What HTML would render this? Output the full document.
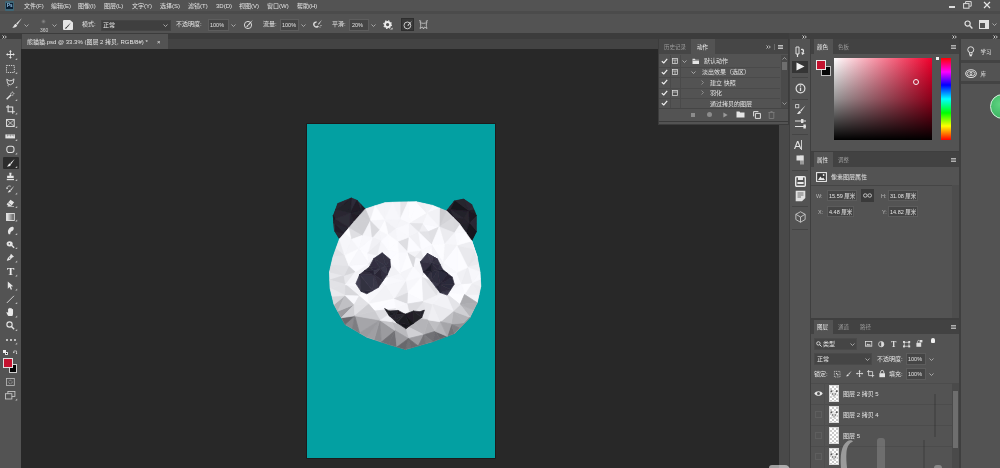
<!DOCTYPE html>
<html lang="zh-CN">
<head>
<meta charset="utf-8">
<title>熊猫猫.psd @ 33.3%</title>
<style>
*{margin:0;padding:0;box-sizing:border-box}
html,body{width:1000px;height:468px;overflow:hidden;background:#282828}
body{position:relative;font-family:"Liberation Sans","Noto Sans CJK SC",sans-serif;font-size:6px;color:#e4e4e4;line-height:1}
.a{position:absolute}
.t{position:absolute;white-space:nowrap;line-height:8px;height:8px}
.dim{color:#9a9a9a}
.inp{position:absolute;background:#454545;border:1px solid #666}
svg{position:absolute;overflow:visible}
.thumb{width:10px;height:17px;border:1px solid #d8d8d8;background-color:#fff;background-image:linear-gradient(45deg,#ccc 25%,transparent 25%,transparent 75%,#ccc 75%),linear-gradient(45deg,#ccc 25%,transparent 25%,transparent 75%,#ccc 75%);background-size:4px 4px;background-position:0 0,2px 2px}
</style>
</head>
<body>
<div id="app" style="position:absolute;left:0;top:0;width:1000px;height:468px;overflow:hidden;filter:blur(.3px);will-change:transform">
<!-- MENU BAR -->
<div class="a" id="menubar" style="left:0;top:0;width:1000px;height:14px;background:#535353"></div>
<div class="a" style="left:0;top:11px;width:1000px;height:3px;background:#4b4b4b"></div>
<div class="a" style="left:5px;top:1px;width:9px;height:9.500px;background:#3f6676;border-radius:1px"></div>
<div class="a" style="left:6px;top:3px;width:7px;height:5.500px;background:#0b1f33"></div>
<div class="t" style="left:7px;top:1.500px;font-size:4.500px;color:#9fcdf2;font-weight:bold">Ps</div>
<div class="t" style="left:24px;top:2px">文件(F)</div>
<div class="t" style="left:51px;top:2px">编辑(E)</div>
<div class="t" style="left:78px;top:2px">图像(I)</div>
<div class="t" style="left:104px;top:2px">图层(L)</div>
<div class="t" style="left:132px;top:2px">文字(Y)</div>
<div class="t" style="left:160px;top:2px">选择(S)</div>
<div class="t" style="left:188px;top:2px">滤镜(T)</div>
<div class="t" style="left:216px;top:2px">3D(D)</div>
<div class="t" style="left:239px;top:2px">视图(V)</div>
<div class="t" style="left:267px;top:2px">窗口(W)</div>
<div class="t" style="left:297px;top:2px">帮助(H)</div>

<!-- OPTIONS BAR -->
<div class="a" id="optbar" style="left:0;top:14px;width:1000px;height:19px;background:#535353"></div>

<!-- TAB BAR / DOCK HEADER -->
<div class="a" id="tabbar" style="left:0;top:33px;width:1000px;height:15.700px;background:#434343"></div>
<div class="a" style="left:0;top:33px;width:1000px;height:6px;background:#3c3c3c"></div>
<div class="a" id="tab" style="left:22px;top:33.500px;width:145.500px;height:15.200px;background:#535353"></div>
<div class="t" style="left:27px;top:38px">熊猫猫.psd @ 33.3% (图层 2 拷贝, RGB/8#) *</div>
<div class="t" style="left:157px;top:38px">×</div>

<!-- LEFT TOOLBAR -->
<div class="a" id="toolbar" style="left:0;top:39px;width:21px;height:429px;background:#535353"></div>

<!-- CANVAS -->
<div class="a" id="doc" style="left:306.500px;top:123.500px;width:188.500px;height:334.500px;background:#03a0a2;box-shadow:0 0 0 .6px #161616"></div>

<!-- DOC SCROLLBAR -->
<div class="a" style="left:779px;top:48px;width:10px;height:420px;background:#494949"></div>
<!-- RIGHT DOCK BG -->
<div class="a" id="dock" style="left:789px;top:33px;width:211px;height:435px;background:#3f3f3f"></div>
<!-- OPTIONS BAR CONTENT -->
<svg style="left:10.500px;top:17px" width="12" height="12" viewBox="0 0 12 12"><path d="M10.8 1.2 L5.2 6.6 L6.4 7.8 Z" fill="#e0e0e0"/><path d="M4.9 7 C3.2 7 3.4 9.2 1.2 10.6 C3.6 11 6 10 6.2 8.2 Z" fill="#e0e0e0"/></svg>
<svg style="left:24px;top:24px" width="5" height="3" viewBox="0 0 5 3"><path d="M.5 .5 L2.5 2.5 L4.5 .5" stroke="#bdbdbd" fill="none" stroke-width=".8"/></svg>
<div class="a" style="left:41px;top:19px;width:5px;height:5px;border-radius:50%;background:radial-gradient(circle,#8a8a8a 0%,#535353 70%)"></div>
<div class="t" style="left:40px;top:26px;font-size:5px;color:#cfcfcf">360</div>
<svg style="left:52px;top:24px" width="5" height="3" viewBox="0 0 5 3"><path d="M.5 .5 L2.5 2.5 L4.5 .5" stroke="#bdbdbd" fill="none" stroke-width=".8"/></svg>
<svg style="left:63px;top:20px" width="10" height="10" viewBox="0 0 10 10"><path d="M1 0 H7 L10 2.5 V9 a1 1 0 0 1 -1 1 H1 a1 1 0 0 1 -1 -1 V1 a1 1 0 0 1 1 -1Z" fill="#e6e6e6"/><path d="M8 2.5 L3.8 6.4 L4.6 7.2 Z M3.4 6.8 C2.6 7 2.8 8 1.8 8.6 C3 8.8 4.2 8.4 4.2 7.5Z" fill="#3a3a3a"/></svg>
<div class="t" style="left:82px;top:20px">模式:</div>
<div class="inp" style="left:101px;top:20px;width:70px;height:11px;border-color:#444;background:#3f3f3f"></div>
<div class="t" style="left:103px;top:21px">正常</div>
<svg style="left:163px;top:24px" width="5" height="3" viewBox="0 0 5 3"><path d="M.5 .5 L2.5 2.5 L4.5 .5" stroke="#bdbdbd" fill="none" stroke-width=".8"/></svg>
<div class="t" style="left:176px;top:20px">不透明度:</div>
<div class="inp" style="left:208px;top:19px;width:21px;height:12px;border-color:#5e5e5e"></div>
<div class="t" style="left:210px;top:21px;font-size:5.5px">100%</div>
<svg style="left:231px;top:24px" width="5" height="3" viewBox="0 0 5 3"><path d="M.5 .5 L2.5 2.5 L4.5 .5" stroke="#bdbdbd" fill="none" stroke-width=".8"/></svg>
<svg style="left:243px;top:19px" width="11" height="11" viewBox="0 0 11 11"><circle cx="5" cy="6" r="3.6" stroke="#d8d8d8" stroke-width="1" fill="none"/><path d="M10 .8 L5 5.6 L5.8 6.4 Z" fill="#e6e6e6"/><path d="M4.6 6 C3.8 6.2 4 7.2 3 7.8 C4.2 8 5.4 7.6 5.4 6.7Z" fill="#e6e6e6"/></svg>
<div class="t" style="left:263px;top:20px">流量:</div>
<div class="inp" style="left:280px;top:19px;width:19px;height:12px;border-color:#5e5e5e"></div>
<div class="t" style="left:282px;top:21px;font-size:5.5px">100%</div>
<svg style="left:301px;top:24px" width="5" height="3" viewBox="0 0 5 3"><path d="M.5 .5 L2.5 2.5 L4.5 .5" stroke="#bdbdbd" fill="none" stroke-width=".8"/></svg>
<svg style="left:312px;top:19px" width="11" height="11" viewBox="0 0 11 11"><path d="M1 5.5 C1 3 3 2 5 2.6 L4.2 4 C3 3.8 2.4 4.6 2.6 5.8 C2.8 7.4 4.6 7.8 5.6 6.6 L7 7.4 C5.4 9.6 1.4 8.8 1 5.5Z" fill="#d8d8d8"/><path d="M10 .8 L6 5 L6.8 5.8 Z" fill="#e6e6e6"/><circle cx="9" cy="6.5" r=".6" fill="#ddd"/><circle cx="8" cy="8" r=".5" fill="#ddd"/></svg>
<div class="t" style="left:332px;top:20px">平滑:</div>
<div class="inp" style="left:349px;top:19px;width:20px;height:12px;border-color:#5e5e5e"></div>
<div class="t" style="left:352px;top:21px;font-size:5.5px">20%</div>
<svg style="left:371px;top:24px" width="5" height="3" viewBox="0 0 5 3"><path d="M.5 .5 L2.5 2.5 L4.5 .5" stroke="#bdbdbd" fill="none" stroke-width=".8"/></svg>
<svg style="left:383px;top:20px" width="10" height="10" viewBox="0 0 10 10"><circle cx="4.6" cy="4.6" r="2.6" stroke="#ececec" stroke-width="1.9" fill="none"/><circle cx="4.6" cy="4.6" r="3.9" stroke="#ececec" stroke-width="1.1" fill="none" stroke-dasharray="1.4 1.66"/><path d="M7 9.6 L9.6 9.6 L9.6 7.6Z" fill="#d0d0d0"/></svg>
<div class="a" style="left:401px;top:18px;width:13px;height:13px;background:#383838;border:1px solid #2e2e2e"></div>
<svg style="left:403px;top:20px" width="10" height="10" viewBox="0 0 10 10"><circle cx="4.4" cy="5.4" r="3.4" stroke="#d8d8d8" stroke-width=".9" fill="none"/><path d="M9.4 .6 L4.4 5.2 L5.2 6 Z" fill="#e6e6e6"/></svg>
<svg style="left:418px;top:19px" width="11" height="11" viewBox="0 0 11 11"><path d="M2 3 L1 1 L3.5 2 Z M9 3 L10 1 L7.5 2Z" fill="#d0d0d0"/><path d="M2 3.5 C3 5 3 7 2 9.5 L4.5 8 L5.5 10 L6.5 8 L9 9.5 C8 7 8 5 9 3.5 C7 4.6 4 4.6 2 3.5Z" stroke="#d0d0d0" stroke-width=".8" fill="none"/></svg>
<!-- right of options bar -->
<svg style="left:964px;top:20px" width="9" height="9" viewBox="0 0 9 9"><circle cx="3.6" cy="3.6" r="2.6" stroke="#e0e0e0" stroke-width="1.2" fill="none"/><path d="M5.6 5.6 L8.4 8.4" stroke="#e0e0e0" stroke-width="1.4"/></svg>
<svg style="left:979px;top:20px" width="10" height="9" viewBox="0 0 10 9"><rect x=".5" y=".5" width="9" height="8" stroke="#e0e0e0" fill="none"/><rect x="1" y="1" width="8" height="2" fill="#e0e0e0"/><rect x="6" y="3" width="3" height="5" fill="#e0e0e0"/></svg>
<svg style="left:992px;top:23px" width="5" height="3" viewBox="0 0 5 3"><path d="M.5 .5 L2.5 2.5 L4.5 .5" stroke="#bdbdbd" fill="none" stroke-width=".8"/></svg>
<!-- window controls -->
<div class="a" style="left:949px;top:6px;width:6px;height:1.5px;background:#dcdcdc"></div>
<svg style="left:963px;top:1px" width="9" height="8" viewBox="0 0 9 8"><rect x=".6" y="2.6" width="5.4" height="4.6" stroke="#dcdcdc" fill="none" stroke-width="1"/><path d="M2.6 2.2 V.6 H8.2 V5.2 H6.4" stroke="#dcdcdc" fill="none" stroke-width="1"/></svg>
<svg style="left:983px;top:1px" width="8" height="8" viewBox="0 0 8 8"><path d="M1 1 L7 7 M7 1 L1 7" stroke="#e6e6e6" stroke-width="1.2"/></svg>

<!-- TOOL ICONS -->
<svg style="left:2px;top:34.5px" width="5" height="4" viewBox="0 0 5 4"><path d="M.5 .5 L2 2 L.5 3.500 M2.800 .5 L4.300 2 L2.800 3.500" fill="none" stroke="#d8d8d8" stroke-width=".9"/></svg>
<!-- move -->
<svg style="left:6.1px;top:50.1px" width="8.8" height="8.8" viewBox="0 0 11 11"><path d="M5.5 0 L7.3 2.2 H6.1 V4.9 H8.8 V3.7 L11 5.5 L8.8 7.3 V6.1 H6.1 V8.8 H7.3 L5.5 11 L3.7 8.8 H4.9 V6.1 H2.2 V7.3 L0 5.5 L2.2 3.7 V4.9 H4.9 V2.2 H3.7 Z" fill="#e4e4e4"/></svg>
<!-- marquee -->
<svg style="left:6.1px;top:65.0px" width="8.8" height="8.0" viewBox="0 0 11 10"><rect x=".6" y=".6" width="9.8" height="8.8" fill="none" stroke="#e0e0e0" stroke-width="1.1" stroke-dasharray="1.6 1.2"/></svg>
<!-- lasso -->
<svg style="left:6.1px;top:78.1px" width="8.8" height="8.8" viewBox="0 0 11 11"><path d="M1 1.5 L4 3.5 L7.5 3.2 L10 1 L9 6.5 L5.5 8.5 L2 7 Z" fill="none" stroke="#e0e0e0" stroke-width="1.1"/><path d="M3 8 C2 9 2.4 10 3.6 10.4" fill="none" stroke="#e0e0e0" stroke-width=".9"/></svg>
<!-- wand -->
<svg style="left:6.1px;top:91.1px" width="8.8" height="8.8" viewBox="0 0 11 11"><path d="M.8 10.2 L6.4 4.6" stroke="#e4e4e4" stroke-width="1.8"/><path d="M8 .6 V2.4 M8 4.4 V6 M5.4 3.2 H7 M9 3.2 H10.6 M9.6 1.4 L9 2 M6.2 1.4 L6.8 2 M9.6 5 L9 4.4" stroke="#e4e4e4" stroke-width=".8"/></svg>
<!-- crop -->
<svg style="left:6.1px;top:105.1px" width="8.8" height="8.8" viewBox="0 0 11 11"><path d="M2.6 0 V8.4 H11 M0 2.6 H8.4 V11" fill="none" stroke="#e4e4e4" stroke-width="1.3"/></svg>
<!-- frame -->
<svg style="left:6.1px;top:119.0px" width="8.8" height="8.0" viewBox="0 0 11 10"><rect x=".7" y=".7" width="9.6" height="8.6" fill="none" stroke="#e0e0e0" stroke-width="1.2"/><path d="M.7 .7 L10.3 9.3 M10.3 .7 L.7 9.3" stroke="#e0e0e0" stroke-width=".9"/></svg>
<!-- ruler -->
<svg style="left:5.3px;top:133.6px" width="10.4" height="4.8" viewBox="0 0 13 6"><rect x=".5" y=".5" width="12" height="5" fill="#e4e4e4"/><path d="M3 .5 V3 M5 .5 V2.4 M7 .5 V3 M9 .5 V2.4 M11 .5 V3" stroke="#535353" stroke-width=".7"/></svg>
<!-- ellipse / patch -->
<svg style="left:6.1px;top:145.1px" width="8.8" height="8.8" viewBox="0 0 11 11"><rect x="1" y="1.6" width="9" height="7.8" rx="3" fill="none" stroke="#e0e0e0" stroke-width="1.3"/></svg>
<!-- brush (selected) -->
<div class="a" style="left:3px;top:157px;width:16px;height:12px;background:#2c2c2c;border-radius:1px"></div>
<svg style="left:6.2px;top:158.2px" width="9.6" height="9.6" viewBox="0 0 12 12"><path d="M10.8 1.2 L5.2 6.6 L6.4 7.8 Z" fill="#f0f0f0"/><path d="M4.9 7 C3.2 7 3.4 9.2 1.2 10.6 C3.6 11 6 10 6.2 8.2 Z" fill="#f0f0f0"/></svg>
<!-- stamp -->
<svg style="left:6.1px;top:172.1px" width="8.8" height="8.8" viewBox="0 0 11 11"><path d="M4 .8 H7 L6.4 4.6 H9.6 V7.4 H1.4 V4.6 H4.6 Z" fill="#e4e4e4"/><rect x="1" y="8.6" width="9" height="1.6" fill="#e4e4e4"/></svg>
<!-- history brush -->
<svg style="left:6.1px;top:185.1px" width="8.8" height="8.8" viewBox="0 0 11 11"><path d="M10.4 .8 L5.4 5.8 L6.4 6.8 Z" fill="#e4e4e4"/><path d="M5 6.2 C3.6 6.2 3.8 8 2 9.2 C4 9.6 6 8.8 6.2 7.2 Z" fill="#e4e4e4"/><path d="M1 4.6 A3.4 3.4 0 0 1 6 1.6" fill="none" stroke="#e4e4e4" stroke-width=".9"/><path d="M.2 3 L1.2 5.2 L2.8 3.6Z" fill="#e4e4e4"/></svg>
<!-- eraser -->
<svg style="left:6.1px;top:199.0px" width="8.8" height="8.0" viewBox="0 0 11 10"><path d="M5.6 .8 L10.2 4.2 L6.6 8.6 H3 L.8 6.6 Z" fill="#e4e4e4"/><path d="M2.6 4.6 L6.8 8" stroke="#535353" stroke-width=".8"/><path d="M2 9.4 H10" stroke="#e4e4e4" stroke-width=".8"/></svg>
<!-- gradient -->
<svg style="left:6.1px;top:213.0px" width="8.8" height="8.0" viewBox="0 0 11 10"><defs><linearGradient id="gg" x1="0" x2="1"><stop offset="0" stop-color="#f0f0f0"/><stop offset="1" stop-color="#555"/></linearGradient></defs><rect x=".6" y=".6" width="9.8" height="8.8" fill="url(#gg)" stroke="#e4e4e4" stroke-width="1.1"/></svg>
<!-- smudge -->
<svg style="left:6.1px;top:226.1px" width="8.8" height="8.8" viewBox="0 0 11 11"><path d="M3.4 10.4 C2 8 2.2 5.6 3.4 4 C4.4 2.2 6.6 .6 8.4 1 C10.2 1.6 10 4.2 8.6 5.6 C7.4 6.8 6.4 6.4 5.8 7.8 C5.4 8.8 5.4 9.6 5.2 10.4 Z" fill="#e4e4e4"/></svg>
<!-- dodge -->
<svg style="left:6.1px;top:240.1px" width="8.8" height="8.8" viewBox="0 0 11 11"><ellipse cx="4.6" cy="4.8" rx="3.8" ry="3.2" fill="#e4e4e4"/><path d="M7 6.6 L10.2 9.6" stroke="#e4e4e4" stroke-width="1.8"/><circle cx="4.2" cy="4.8" r="1" fill="#535353"/></svg>
<!-- pen -->
<svg style="left:6.1px;top:253.1px" width="8.8" height="8.8" viewBox="0 0 11 11"><path d="M6.2 1 L10 4.8 L7.4 6 C6.4 7.8 4.8 9.2 1.4 9.8 L1 9.4 C1.8 6.2 3.2 4.6 5 3.6 Z" fill="#e4e4e4"/><circle cx="4.6" cy="6.4" r=".9" fill="#535353"/></svg>
<!-- type -->
<div class="t" style="left:7px;top:265px;font-family:'Liberation Serif',serif;font-size:11px;line-height:13px;height:13px;color:#ececec;font-weight:bold">T</div>
<!-- path select arrow -->
<svg style="left:6.9px;top:281.2px" width="7.2" height="9.6" viewBox="0 0 9 12"><path d="M1 .6 L1 9.6 L3.2 7.4 L4.8 11 L6.4 10.2 L4.8 6.8 L7.8 6.6 Z" fill="#e4e4e4"/></svg>
<!-- line -->
<svg style="left:6.1px;top:295.1px" width="8.8" height="8.8" viewBox="0 0 11 11"><path d="M1 10 L10 1" stroke="#e0e0e0" stroke-width="1.1"/></svg>
<!-- hand -->
<svg style="left:6.2px;top:307.2px" width="9.6" height="9.6" viewBox="0 0 12 12"><path d="M3 11.4 C2 9.6 .8 8.2 .6 6.8 C.8 6 1.8 6.2 2.6 7.4 V2.6 C2.6 1.6 4 1.6 4 2.6 V1.6 C4 .6 5.6 .6 5.6 1.6 V2 C5.6 1 7.2 1 7.2 2 V3 C7.2 2.2 8.8 2.2 8.8 3.2 V8 C8.8 9.6 8.2 10.4 7.8 11.4 Z" fill="#e8e8e8"/></svg>
<!-- zoom -->
<svg style="left:6.1px;top:321.1px" width="8.8" height="8.8" viewBox="0 0 11 11"><circle cx="4.4" cy="4.4" r="3.3" stroke="#e4e4e4" stroke-width="1.4" fill="none"/><path d="M6.8 6.8 L10.2 10.2" stroke="#e4e4e4" stroke-width="1.7"/></svg>
<!-- more -->
<div class="a" style="left:6px;top:339px;width:2px;height:2px;border-radius:50%;background:#e0e0e0"></div>
<div class="a" style="left:10px;top:339px;width:2px;height:2px;border-radius:50%;background:#e0e0e0"></div>
<div class="a" style="left:14px;top:339px;width:2px;height:2px;border-radius:50%;background:#e0e0e0"></div>
<!-- default/swap -->
<div class="a" style="left:5px;top:352px;width:3px;height:3px;background:#111;border:.5px solid #ddd"></div>
<div class="a" style="left:3px;top:350px;width:3px;height:3px;background:#eee"></div>
<svg style="left:12.6px;top:349.6px" width="4.8" height="4.8" viewBox="0 0 6 6"><path d="M1 3.4 V1.2 H4.4 V4.6" fill="none" stroke="#e0e0e0" stroke-width=".8"/><path d="M0 2.4 L1 4 L2 2.4Z M3.4 3.6 L4.4 5.4 L5.4 3.6Z" fill="#e0e0e0"/></svg>
<!-- fg/bg swatches -->
<div class="a" style="left:9px;top:364px;width:8px;height:9px;background:#050505;border:1px solid #cfcfcf"></div>
<div class="a" style="left:3px;top:358px;width:10px;height:10px;background:#c4122f;border:1px solid #e0e0e0"></div>
<!-- quick mask -->
<svg style="left:6.1px;top:378.0px" width="8.8" height="8.0" viewBox="0 0 11 10"><rect x=".6" y=".6" width="9.8" height="8.8" fill="none" stroke="#bdbdbd" stroke-width="1"/><circle cx="5.5" cy="5" r="2.2" fill="none" stroke="#bdbdbd" stroke-width=".9" stroke-dasharray="1 .8"/></svg>
<!-- screen mode -->
<svg style="left:5.3px;top:391.1px" width="10.4" height="8.8" viewBox="0 0 13 11"><rect x="3.6" y=".6" width="8.8" height="6.4" fill="none" stroke="#d0d0d0" stroke-width="1"/><rect x=".6" y="3.4" width="8" height="6.6" fill="#535353" stroke="#d0d0d0" stroke-width="1"/></svg>

<!-- sub-tool markers -->
<svg style="left:0;top:0" width="21" height="468" viewBox="0 0 21 468"><g fill="#bdbdbd"><path d="M17.2 58.0 v2 h-2z"/><path d="M17.2 72.0 v2 h-2z"/><path d="M17.2 86.0 v2 h-2z"/><path d="M17.2 99.0 v2 h-2z"/><path d="M17.2 112.5 v2 h-2z"/><path d="M17.2 126.0 v2 h-2z"/><path d="M17.2 139.0 v2 h-2z"/><path d="M17.2 152.5 v2 h-2z"/><path d="M17.2 166.0 v2 h-2z"/><path d="M17.2 179.0 v2 h-2z"/><path d="M17.2 192.5 v2 h-2z"/><path d="M17.2 206.0 v2 h-2z"/><path d="M17.2 219.5 v2 h-2z"/><path d="M17.2 233.0 v2 h-2z"/><path d="M17.2 247.0 v2 h-2z"/><path d="M17.2 260.5 v2 h-2z"/><path d="M17.2 274.5 v2 h-2z"/><path d="M17.2 288.5 v2 h-2z"/><path d="M17.2 302.0 v2 h-2z"/><path d="M17.2 315.5 v2 h-2z"/><path d="M17.2 329.0 v2 h-2z"/><path d="M17.2 342.5 v2 h-2z"/><path d="M17.2 398.5 v2 h-2z"/></g></svg>

<!-- ===== ACTIONS FLOATING PANEL ===== -->
<div class="a" style="left:658px;top:38px;width:131px;height:87px;background:#535353;border:1px solid #3c3c3c"></div>
<div class="a" style="left:659px;top:39px;width:129px;height:15px;background:#464646"></div>
<div class="a" style="left:691px;top:39px;width:24px;height:15px;background:#535353"></div>
<div class="t dim" style="left:664px;top:43px;font-size:5.5px">历史记录</div>
<div class="t" style="left:697px;top:43px;font-size:5.5px;color:#f0f0f0">动作</div>
<svg style="left:765.5px;top:45px" width="5" height="4" viewBox="0 0 5 4"><path d="M.5 .5 L2 2 L.5 3.500 M2.800 .5 L4.300 2 L2.800 3.500" fill="none" stroke="#c4c4c4" stroke-width=".9"/></svg>
<div class="a" style="left:774px;top:44px;width:1px;height:6px;background:#6a6a6a"></div>
<div class="a" style="left:778px;top:45px;width:5px;height:1px;background:#c0c0c0;box-shadow:0 1.5px 0 #c0c0c0,0 3px 0 #c0c0c0"></div>
<div class="a" style="left:658px;top:121px;width:131px;height:1px;background:#3a3a3a"></div>
<!-- rows -->
<div class="a" style="left:659px;top:66.5px;width:121px;height:1px;background:#4a4a4a"></div>
<div class="a" style="left:659px;top:77px;width:121px;height:1px;background:#4a4a4a"></div>
<div class="a" style="left:659px;top:87.500px;width:121px;height:1px;background:#4a4a4a"></div>
<div class="a" style="left:659px;top:98px;width:121px;height:1px;background:#4a4a4a"></div>
<div class="a" style="left:659px;top:108px;width:129px;height:1px;background:#454545"></div>
<div class="a" style="left:670px;top:55px;width:1px;height:53px;background:#4a4a4a"></div>
<div class="a" style="left:680px;top:55px;width:1px;height:53px;background:#4a4a4a"></div>
<svg style="left:661px;top:58px" width="7" height="6" viewBox="0 0 7 6"><path d="M.8 3.2 L2.8 5 L6.2 .8" fill="none" stroke="#f0f0f0" stroke-width="1.2"/></svg>
<svg style="left:661px;top:68.500px" width="7" height="6" viewBox="0 0 7 6"><path d="M.8 3.2 L2.8 5 L6.2 .8" fill="none" stroke="#f0f0f0" stroke-width="1.2"/></svg>
<svg style="left:661px;top:79px" width="7" height="6" viewBox="0 0 7 6"><path d="M.8 3.2 L2.8 5 L6.2 .8" fill="none" stroke="#f0f0f0" stroke-width="1.2"/></svg>
<svg style="left:661px;top:89.500px" width="7" height="6" viewBox="0 0 7 6"><path d="M.8 3.2 L2.8 5 L6.2 .8" fill="none" stroke="#f0f0f0" stroke-width="1.2"/></svg>
<svg style="left:661px;top:100px" width="7" height="6" viewBox="0 0 7 6"><path d="M.8 3.2 L2.8 5 L6.2 .8" fill="none" stroke="#f0f0f0" stroke-width="1.2"/></svg>
<svg style="left:672px;top:58px" width="6" height="6" viewBox="0 0 7 7"><rect x=".5" y=".5" width="6" height="6" fill="none" stroke="#d8d8d8" stroke-width=".9"/><path d="M.5 2.4 H6.5 M3.5 2.4 V6.5" stroke="#d8d8d8" stroke-width=".8"/></svg>
<svg style="left:672px;top:68.500px" width="6" height="6" viewBox="0 0 7 7"><rect x=".5" y=".5" width="6" height="6" fill="none" stroke="#d8d8d8" stroke-width=".9"/><path d="M.5 2.4 H6.5 M3.5 2.4 V6.5" stroke="#d8d8d8" stroke-width=".8"/></svg>
<svg style="left:672px;top:89.500px" width="6" height="6" viewBox="0 0 7 7"><rect x=".5" y=".5" width="6" height="6" fill="none" stroke="#d8d8d8" stroke-width=".9"/><path d="M.5 2.4 H6.5" stroke="#d8d8d8" stroke-width=".8"/></svg>
<svg style="left:681.500px;top:60px" width="5" height="3" viewBox="0 0 5 3"><path d="M.5 .5 L2.5 2.5 L4.5 .5" stroke="#bdbdbd" fill="none" stroke-width=".8"/></svg>
<svg style="left:692px;top:58px" width="7.500" height="6.500" viewBox="0 0 9 8"><path d="M.5 1 H3.4 L4.2 2 H8.5 V7.5 H.5Z" fill="#e6e6e6"/><path d="M.5 3 H8.5" stroke="#535353" stroke-width=".7"/></svg>
<div class="t" style="left:704px;top:57px">默认动作</div>
<svg style="left:691px;top:71px" width="5" height="3" viewBox="0 0 5 3"><path d="M.5 .5 L2.5 2.5 L4.5 .5" stroke="#bdbdbd" fill="none" stroke-width=".8"/></svg>
<div class="t" style="left:702px;top:68px">淡出效果（选区）</div>
<svg style="left:701px;top:79.500px" width="3" height="5" viewBox="0 0 3 5"><path d="M.5 .5 L2.5 2.5 L.5 4.500" stroke="#9a9a9a" fill="none" stroke-width=".8"/></svg>
<div class="t" style="left:710px;top:78.500px">建立 快照</div>
<svg style="left:701px;top:90px" width="3" height="5" viewBox="0 0 3 5"><path d="M.5 .5 L2.5 2.5 L.5 4.500" stroke="#9a9a9a" fill="none" stroke-width=".8"/></svg>
<div class="t" style="left:710px;top:89px">羽化</div>
<div class="t" style="left:710px;top:99.500px">通过拷贝的图层</div>
<!-- scroll -->
<div class="a" style="left:781px;top:55px;width:7px;height:53px;background:#4a4a4a"></div>
<svg style="left:782px;top:57px" width="5" height="3" viewBox="0 0 5 3"><path d="M.5 2.500 L2.500 .5 L4.500 2.500" stroke="#a8a8a8" fill="none" stroke-width=".8"/></svg>
<div class="a" style="left:782px;top:62px;width:5px;height:8px;background:#6e6e6e"></div>
<svg style="left:782px;top:102px" width="5" height="3" viewBox="0 0 5 3"><path d="M.5 .5 L2.5 2.5 L4.5 .5" stroke="#a8a8a8" fill="none" stroke-width=".8"/></svg>
<!-- bottom buttons -->
<div class="a" style="left:691px;top:113px;width:4px;height:4px;background:#8c8c8c"></div>
<div class="a" style="left:707px;top:112px;width:5px;height:5px;border-radius:50%;background:#8c8c8c"></div>
<svg style="left:723px;top:112px" width="5" height="6" viewBox="0 0 5 6"><path d="M.4 .4 L4.6 3 L.4 5.600Z" fill="#9a9a9a"/></svg>
<svg style="left:736px;top:111px" width="9" height="7" viewBox="0 0 9 7"><path d="M.5 .5 H3.400 L4.200 1.500 H8.500 V6.500 H.5Z" fill="#e6e6e6"/></svg>
<svg style="left:753px;top:111px" width="8" height="8" viewBox="0 0 8 8"><path d="M2.400 2.400 H7.400 V7.400 H2.400Z M.6 5.400 V.6 H5.400" fill="none" stroke="#e0e0e0" stroke-width="1"/></svg>
<svg style="left:768px;top:111px" width="7" height="8" viewBox="0 0 7 8"><path d="M.5 1.500 H6.500 M2.500 .5 H4.500 M1.200 1.500 V7.500 H5.800 V1.500" fill="none" stroke="#7c7c7c" stroke-width=".9"/></svg>

<!-- ===== DOCK ===== -->
<svg style="left:802px;top:34.5px" width="5" height="4" viewBox="0 0 5 4"><path d="M.5 .5 L2 2 L.5 3.500 M2.800 .5 L4.300 2 L2.800 3.500" fill="none" stroke="#d8d8d8" stroke-width=".9"/></svg>
<svg style="left:951.5px;top:34.5px" width="5" height="4" viewBox="0 0 5 4"><path d="M.5 .5 L2 2 L.5 3.500 M2.800 .5 L4.300 2 L2.800 3.500" fill="none" stroke="#d8d8d8" stroke-width=".9"/></svg>
<svg style="left:993px;top:34.5px" width="5" height="4" viewBox="0 0 5 4"><path d="M.5 .5 L2 2 L.5 3.500 M2.800 .5 L4.300 2 L2.800 3.500" fill="none" stroke="#d8d8d8" stroke-width=".9"/></svg>
<!-- icon column -->
<div class="a" style="left:790px;top:39px;width:20px;height:429px;background:#535353"></div>
<div class="a" style="left:792px;top:61px;width:16px;height:12px;background:#353535"></div>
<svg style="left:795px;top:46px" width="11" height="12" viewBox="0 0 11 12"><path d="M1 1 H4 V8 H1Z" fill="none" stroke="#e0e0e0" stroke-width="1"/><path d="M2.500 8 V11" stroke="#e0e0e0" stroke-width="1.200"/><path d="M6 3 C8.500 2 10 4.500 8.500 7 L9.800 7.500 L7 9 L6.400 6 L7.500 6.500 C8.500 5 7.500 3.500 6 4Z" fill="#e0e0e0"/></svg>
<svg style="left:796px;top:62px" width="9" height="9" viewBox="0 0 9 9"><path d="M.5 .5 L8.500 4.500 L.5 8.500Z" fill="#f0f0f0"/></svg>
<div class="a" style="left:792px;top:77px;width:16px;height:1px;background:#454545"></div>
<svg style="left:795px;top:83px" width="11" height="11" viewBox="0 0 11 11"><circle cx="5.500" cy="5.500" r="4.400" fill="none" stroke="#e0e0e0" stroke-width="1.200"/><path d="M5.500 4.600 V8" stroke="#e0e0e0" stroke-width="1.300"/><circle cx="5.500" cy="3" r=".8" fill="#e0e0e0"/></svg>
<div class="a" style="left:792px;top:99px;width:16px;height:1px;background:#454545"></div>
<svg style="left:795px;top:104px" width="11" height="12" viewBox="0 0 11 12"><path d="M10.400 1.400 L5.200 6.600 L6.200 7.600 Z" fill="#e4e4e4"/><path d="M4.800 7 C3.400 7 3.600 8.800 1.800 10 C3.800 10.400 5.800 9.600 6 8 Z" fill="#e4e4e4"/><rect x=".6" y=".6" width="3.200" height="3.200" fill="none" stroke="#ddd" stroke-width=".8"/></svg>
<svg style="left:795px;top:119px" width="11" height="10" viewBox="0 0 11 10"><path d="M0 2 H11 M0 7.500 H11" stroke="#e0e0e0" stroke-width="1.200"/><rect x="6" y="0" width="2.400" height="4" fill="#e0e0e0"/><rect x="8.400" y="5.500" width="2.400" height="4" fill="#e0e0e0"/></svg>
<div class="a" style="left:792px;top:134px;width:16px;height:1px;background:#454545"></div>
<div class="t" style="left:794px;top:139px;font-size:11px;line-height:12px;height:12px;color:#e4e4e4">A<span style="font-size:10px;position:relative;top:-1px;margin-left:-1px">|</span></div>
<svg style="left:796px;top:155px" width="9" height="10" viewBox="0 0 9 10"><path d="M.5 .5 H7.500 V5.500 H.5Z" fill="#e0e0e0"/><path d="M5 .5 V9.500 M7 .5 V9.500" stroke="#e0e0e0" stroke-width="1"/></svg>
<div class="a" style="left:792px;top:170px;width:16px;height:1px;background:#454545"></div>
<svg style="left:795px;top:176px" width="11" height="11" viewBox="0 0 11 11"><rect x=".7" y=".7" width="9.600" height="9.600" rx="1" fill="none" stroke="#e8e8e8" stroke-width="1.400"/><rect x="3" y="1" width="5" height="3" fill="#e8e8e8"/><rect x="2.400" y="6" width="6.200" height="2" fill="#e8e8e8"/></svg>
<svg style="left:795px;top:190px" width="11" height="12" viewBox="0 0 11 12"><path d="M.7 .7 H10.300 V8 L7 11.300 H.7Z" fill="#e0e0e0"/><path d="M2.500 3 H8.500 M2.500 5 H8.500 M2.500 7 H6" stroke="#535353" stroke-width=".8"/></svg>
<div class="a" style="left:792px;top:206px;width:16px;height:1px;background:#454545"></div>
<svg style="left:795px;top:211px" width="11" height="12" viewBox="0 0 13 14"><path d="M6.500 .8 L12 3.800 V10 L6.500 13.200 L1 10 V3.800 Z M1 3.800 L6.500 7 L12 3.800 M6.500 7 V13.200" fill="none" stroke="#cfcfcf" stroke-width="1"/></svg>
<div class="a" style="left:792px;top:229px;width:16px;height:1px;background:#454545"></div>

<!-- ===== COLOR PANEL ===== -->
<div class="a" style="left:811px;top:39px;width:148px;height:112px;background:#535353"></div>
<div class="a" style="left:811px;top:39px;width:148px;height:15px;background:#424242"></div>
<div class="a" style="left:814px;top:39px;width:19px;height:15px;background:#535353"></div>
<div class="t" style="left:817px;top:43px;font-size:5.5px;color:#f0f0f0">颜色</div>
<div class="t dim" style="left:838px;top:43px;font-size:5.5px">色板</div>
<div class="a" style="left:951px;top:45px;width:5px;height:1px;background:#b0b0b0;box-shadow:0 1.5px 0 #b0b0b0,0 3px 0 #b0b0b0"></div>
<div class="a" style="left:821px;top:66px;width:10px;height:10px;background:#050505;border:1px solid #bdbdbd"></div>
<div class="a" style="left:816px;top:60px;width:10px;height:10px;background:#c4122f;border:1px solid #e8e8e8"></div>
<div class="a" id="sv" style="left:834px;top:58px;width:98px;height:82px;background:linear-gradient(to top,#000 0%,rgba(0,0,0,.42) 50%,rgba(0,0,0,0) 100%),linear-gradient(to right,#fff,#f0002c)"></div>
<div class="a" style="left:913px;top:79px;width:6px;height:6px;border-radius:50%;border:1px solid #f4f4f4"></div>
<div class="a" id="hue" style="left:941px;top:58px;width:10px;height:82px;background:linear-gradient(to bottom,#f00 0%,#f0f 17%,#00f 33%,#0ff 50%,#0f0 67%,#ff0 83%,#f00 100%)"></div>
<div class="a" style="left:936px;top:57px;width:3px;height:3px;background:#f0f0f0"></div>

<!-- ===== PROPERTIES PANEL ===== -->
<div class="a" style="left:811px;top:152px;width:148px;height:166px;background:#535353"></div>
<div class="a" style="left:811px;top:152px;width:148px;height:15px;background:#424242"></div>
<div class="a" style="left:814px;top:152px;width:19px;height:15px;background:#535353"></div>
<div class="t" style="left:817px;top:156px;font-size:5.5px;color:#f0f0f0">属性</div>
<div class="t dim" style="left:838px;top:156px;font-size:5.5px">调整</div>
<div class="a" style="left:951px;top:158px;width:5px;height:1px;background:#b0b0b0;box-shadow:0 1.5px 0 #b0b0b0,0 3px 0 #b0b0b0"></div>
<svg style="left:816px;top:172px" width="11" height="10" viewBox="0 0 11 10"><rect x=".6" y=".6" width="9.800" height="8.800" fill="#3a3a3a" stroke="#e8e8e8" stroke-width="1.100"/><path d="M2 8 L4.400 4.600 L6 6.600 L7.200 5.400 L9 8Z" fill="#e8e8e8"/><circle cx="7.600" cy="3" r=".9" fill="#e8e8e8"/></svg>
<div class="t" style="left:831px;top:173px">像素图层属性</div>
<div class="a" style="left:811px;top:185px;width:141px;height:1px;background:#454545"></div>
<div class="t" style="left:816px;top:192px;font-size:5.5px;color:#bbb">W:</div>
<div class="inp" style="left:827px;top:190px;width:30px;height:11px;border-color:#5c5c5c"></div>
<div class="t" style="left:829px;top:192px;font-size:5.5px">15.59 厘米</div>
<div class="a" style="left:861px;top:189px;width:13px;height:13px;background:#3a3a3a"></div>
<svg style="left:863px;top:193px" width="9" height="5" viewBox="0 0 9 5"><rect x=".5" y=".8" width="3.600" height="3.400" rx="1.700" fill="none" stroke="#d0d0d0" stroke-width=".9"/><rect x="4.900" y=".8" width="3.600" height="3.400" rx="1.700" fill="none" stroke="#d0d0d0" stroke-width=".9"/></svg>
<div class="t" style="left:881px;top:192px;font-size:5.5px;color:#bbb">H:</div>
<div class="inp" style="left:888px;top:190px;width:30px;height:11px;border-color:#5c5c5c"></div>
<div class="t" style="left:890px;top:192px;font-size:5.5px">31.08 厘米</div>
<div class="t" style="left:818px;top:208px;font-size:5.5px;color:#bbb">X:</div>
<div class="inp" style="left:827px;top:206px;width:27px;height:11px;border-color:#5c5c5c"></div>
<div class="t" style="left:829px;top:208px;font-size:5.5px">4.48 厘米</div>
<div class="t" style="left:882px;top:208px;font-size:5.5px;color:#bbb">Y:</div>
<div class="inp" style="left:888px;top:206px;width:30px;height:11px;border-color:#5c5c5c"></div>
<div class="t" style="left:890px;top:208px;font-size:5.5px">14.82 厘米</div>
<div class="a" style="left:952px;top:185px;width:7px;height:133px;background:#4d4d4d"></div>

<!-- ===== LAYERS PANEL ===== -->
<div class="a" style="left:811px;top:320px;width:148px;height:148px;background:#535353"></div>
<div class="a" style="left:811px;top:320px;width:148px;height:14px;background:#424242"></div>
<div class="a" style="left:814px;top:320px;width:19px;height:14px;background:#535353"></div>
<div class="t" style="left:817px;top:323px;font-size:5.5px;color:#f0f0f0">图层</div>
<div class="t dim" style="left:838px;top:323px;font-size:5.5px">通道</div>
<div class="t dim" style="left:860px;top:323px;font-size:5.5px">路径</div>
<div class="a" style="left:951px;top:325px;width:5px;height:1px;background:#b0b0b0;box-shadow:0 1.5px 0 #b0b0b0,0 3px 0 #b0b0b0"></div>
<!-- filter row -->
<div class="inp" style="left:814px;top:338px;width:43px;height:12px;border-color:#4a4a4a;background:#454545"></div>
<svg style="left:816px;top:341px" width="6" height="6" viewBox="0 0 6 6"><circle cx="2.400" cy="2.400" r="1.700" stroke="#ddd" stroke-width=".9" fill="none"/><path d="M3.600 3.600 L5.600 5.600" stroke="#ddd" stroke-width="1"/></svg>
<div class="t" style="left:823px;top:340px">类型</div>
<svg style="left:850px;top:343px" width="5" height="3" viewBox="0 0 5 3"><path d="M.5 .5 L2.5 2.5 L4.5 .5" stroke="#bdbdbd" fill="none" stroke-width=".8"/></svg>
<svg style="left:864.9px;top:340.8px" width="7.2" height="6.4" viewBox="0 0 9 8"><rect x=".5" y=".5" width="8" height="6" fill="none" stroke="#ddd" stroke-width="1"/><path d="M1.500 5.500 L3.500 3 L5 4.600 L6 3.800 L7.500 5.500Z" fill="#ddd"/></svg>
<svg style="left:877.8px;top:340.8px" width="6.4" height="6.4" viewBox="0 0 8 8"><circle cx="4" cy="4" r="3.300" fill="none" stroke="#ddd" stroke-width="1"/><path d="M4 .7 A3.300 3.300 0 0 1 4 7.300Z" fill="#ddd"/></svg>
<div class="t" style="left:891px;top:339.500px;font-family:'Liberation Serif',serif;font-size:8px;line-height:10px;height:10px;color:#e0e0e0;font-weight:bold">T</div>
<svg style="left:902.9px;top:340.8px" width="7.2" height="6.4" viewBox="0 0 9 8"><rect x="1.500" y="1.500" width="6" height="5" fill="none" stroke="#ddd" stroke-width=".9"/><rect x="0" y="0" width="2.400" height="2.400" fill="#ddd"/><rect x="6.600" y="0" width="2.400" height="2.400" fill="#ddd"/><rect x="0" y="5.600" width="2.400" height="2.400" fill="#ddd"/><rect x="6.600" y="5.600" width="2.400" height="2.400" fill="#ddd"/></svg>
<svg style="left:915.8px;top:339.9px" width="6.4" height="7.2" viewBox="0 0 8 9"><rect x=".5" y="3.500" width="6" height="5" fill="#ddd"/><path d="M2 3.500 V2 A1.500 1.500 0 0 1 5 2 V3.500" fill="none" stroke="#ddd" stroke-width=".9"/><rect x="5" y="0" width="3" height="3" fill="#ddd"/></svg>
<div class="a" style="left:931px;top:338px;width:4px;height:5px;border-radius:2px 2px 1px 1px;background:#f0f0f0"></div>
<!-- blend row -->
<div class="inp" style="left:814px;top:353px;width:58px;height:12px;border-color:#4a4a4a;background:#454545"></div>
<div class="t" style="left:817px;top:355px">正常</div>
<svg style="left:865px;top:358px" width="5" height="3" viewBox="0 0 5 3"><path d="M.5 .5 L2.5 2.5 L4.5 .5" stroke="#bdbdbd" fill="none" stroke-width=".8"/></svg>
<div class="t" style="left:877px;top:355px">不透明度:</div>
<div class="inp" style="left:906px;top:353px;width:20px;height:12px;border-color:#5c5c5c"></div>
<div class="t" style="left:908px;top:355px;font-size:5.5px">100%</div>
<svg style="left:929px;top:358px" width="5" height="3" viewBox="0 0 5 3"><path d="M.5 .5 L2.5 2.5 L4.5 .5" stroke="#bdbdbd" fill="none" stroke-width=".8"/></svg>
<!-- lock row -->
<div class="t" style="left:814px;top:370px">锁定:</div>
<svg style="left:833.8px;top:370.8px" width="6.4" height="6.4" viewBox="0 0 8 8"><rect x=".5" y=".5" width="7" height="7" fill="none" stroke="#ddd" stroke-width=".9" stroke-dasharray="1.200 .9"/><rect x="2.500" y="2.500" width="1.500" height="1.500" fill="#ddd"/><rect x="4" y="4" width="1.500" height="1.500" fill="#ddd"/></svg>
<svg style="left:844.9px;top:369.9px" width="7.2" height="7.2" viewBox="0 0 9 9"><path d="M8.400 .8 L4 5 L4.900 5.900 Z" fill="#e4e4e4"/><path d="M3.700 5.300 C2.600 5.300 2.800 6.800 1.200 7.800 C3 8.100 4.600 7.500 4.800 6.200 Z" fill="#e4e4e4"/></svg>
<svg style="left:855.9px;top:369.9px" width="7.2" height="7.2" viewBox="0 0 11 11"><path d="M5.500 0 L7.300 2.200 H6.100 V4.900 H8.800 V3.700 L11 5.500 L8.800 7.300 V6.100 H6.100 V8.800 H7.300 L5.500 11 L3.700 8.800 H4.900 V6.100 H2.200 V7.300 L0 5.500 L2.200 3.700 V4.900 H4.900 V2.200 H3.700 Z" fill="#e4e4e4"/></svg>
<svg style="left:866.9px;top:369.9px" width="7.2" height="7.2" viewBox="0 0 9 9"><path d="M2 0 V7 H9 M0 2 H7 V9" fill="none" stroke="#ddd" stroke-width="1"/></svg>
<svg style="left:878.8px;top:369.9px" width="6.4" height="7.2" viewBox="0 0 8 9"><rect x=".5" y="4" width="7" height="5" fill="#e4e4e4"/><path d="M2 4 V2.500 A2 2 0 0 1 6 2.500 V4" fill="none" stroke="#e4e4e4" stroke-width="1"/></svg>
<div class="t" style="left:889px;top:370px">填充:</div>
<div class="inp" style="left:906px;top:368px;width:20px;height:12px;border-color:#5c5c5c"></div>
<div class="t" style="left:908px;top:370px;font-size:5.5px">100%</div>
<svg style="left:929px;top:373px" width="5" height="3" viewBox="0 0 5 3"><path d="M.5 .5 L2.5 2.5 L4.5 .5" stroke="#bdbdbd" fill="none" stroke-width=".8"/></svg>
<!-- layer rows -->
<div class="a" style="left:811px;top:383px;width:141px;height:1px;background:#4c4c4c"></div>
<div class="a" style="left:811px;top:404px;width:141px;height:1px;background:#4c4c4c"></div>
<div class="a" style="left:811px;top:425px;width:141px;height:1px;background:#4c4c4c"></div>
<div class="a" style="left:811px;top:446px;width:141px;height:1px;background:#4c4c4c"></div>
<div class="a" style="left:824px;top:383px;width:1px;height:85px;background:#4e4e4e"></div>
<svg style="left:814px;top:390px" width="9" height="7" viewBox="0 0 9 7"><path d="M.3 3.500 C2 .4 7 .4 8.700 3.500 C7 6.600 2 6.600 .3 3.500Z" fill="#e8e8e8"/><circle cx="4.500" cy="3.500" r="1.500" fill="#535353"/></svg>
<div class="a" style="left:815px;top:411px;width:7px;height:7px;border:1px solid #5e5e5e"></div>
<div class="a" style="left:815px;top:432px;width:7px;height:7px;border:1px solid #5e5e5e"></div>
<div class="a" style="left:815px;top:453px;width:7px;height:7px;border:1px solid #5e5e5e"></div>
<div class="a thumb" style="left:829px;top:385px"></div>
<div class="a thumb" style="left:829px;top:406px"></div>
<div class="a thumb" style="left:829px;top:427px"></div>
<div class="a thumb" style="left:829px;top:448px"></div>
<svg style="left:830px;top:387px" width="8" height="15" viewBox="0 0 8 15"><ellipse cx="4" cy="7" rx="3.200" ry="3.200" fill="#e9e9e9"/><circle cx="1.300" cy="4.300" r="1" fill="#555"/><circle cx="6.700" cy="4.300" r="1" fill="#555"/><circle cx="2.700" cy="7" r=".8" fill="#555"/><circle cx="5.300" cy="7" r=".8" fill="#555"/><circle cx="4" cy="8.800" r=".6" fill="#555"/></svg>
<svg style="left:830px;top:408px" width="8" height="15" viewBox="0 0 8 15"><ellipse cx="4" cy="7" rx="3.200" ry="3.200" fill="#e9e9e9"/><circle cx="1.300" cy="4.300" r="1" fill="#555"/><circle cx="6.700" cy="4.300" r="1" fill="#555"/><circle cx="2.700" cy="7" r=".8" fill="#555"/><circle cx="5.300" cy="7" r=".8" fill="#555"/><circle cx="4" cy="8.800" r=".6" fill="#555"/></svg>
<svg style="left:830px;top:450px" width="8" height="15" viewBox="0 0 8 15"><ellipse cx="4" cy="7" rx="3.200" ry="3.200" fill="#e9e9e9"/><circle cx="1.300" cy="4.300" r="1" fill="#555"/><circle cx="6.700" cy="4.300" r="1" fill="#555"/><circle cx="2.700" cy="7" r=".8" fill="#555"/><circle cx="5.300" cy="7" r=".8" fill="#555"/><circle cx="4" cy="8.800" r=".6" fill="#555"/></svg>
<div class="t" style="left:843px;top:390px">图层 2 拷贝 5</div>
<div class="t" style="left:843px;top:411px">图层 2 拷贝 4</div>
<div class="t" style="left:843px;top:432px">图层 5</div>
<!-- scrollbar -->
<div class="a" style="left:952px;top:383px;width:7px;height:85px;background:#4a4a4a"></div>
<div class="a" style="left:953px;top:391px;width:5px;height:57px;background:#6e6e6e"></div>

<!-- ===== FAR RIGHT COLUMN ===== -->
<div class="a" style="left:961px;top:39px;width:39px;height:429px;background:#535353"></div>
<div class="a" style="left:961px;top:60px;width:39px;height:3px;background:#434343"></div>
<div class="a" style="left:961px;top:81px;width:39px;height:3px;background:#434343"></div>
<svg style="left:967px;top:46px" width="7.500" height="10.800" viewBox="0 0 9 13"><circle cx="4.500" cy="4.500" r="3.600" fill="none" stroke="#e8e8e8" stroke-width="1.100"/><path d="M3 8 V10.500 H6 V8" fill="none" stroke="#e8e8e8" stroke-width="1"/><rect x="3.200" y="10.800" width="2.600" height="1.600" fill="#e8e8e8"/></svg>
<div class="t" style="left:980.500px;top:48px;font-size:5.500px">学习</div>
<svg style="left:964.500px;top:69px" width="12" height="9.200" viewBox="0 0 13 10"><ellipse cx="6.500" cy="5" rx="5.800" ry="4.200" fill="none" stroke="#e0e0e0" stroke-width="1.100"/><ellipse cx="5" cy="5" rx="2.600" ry="2.200" fill="none" stroke="#e0e0e0" stroke-width=".9"/><ellipse cx="8" cy="5" rx="2.600" ry="2.200" fill="none" stroke="#e0e0e0" stroke-width=".9"/></svg>
<div class="t" style="left:980.500px;top:70px;font-size:5.500px">库</div>
<div class="a" style="left:990px;top:93.500px;width:25px;height:25px;border-radius:50%;background:radial-gradient(circle at 40% 40%,#5fd482,#2fa856);border:1.500px solid #d8f5e0"></div>

<svg style="left:307px;top:124px" width="188" height="333" viewBox="0 0 188 333"><defs><filter id="pb" x="-5%" y="-5%" width="110%" height="110%"><feGaussianBlur stdDeviation="0.55"/></filter></defs><g filter="url(#pb)" stroke-width=".7" stroke-linejoin="round">
<polygon points="30.8,79.5 44.3,74.0 50.0,76.3 58.3,85.0 47.0,97.8 32.5,115.0 27.6,107.0 26.3,91.6" fill="#26242e"/><polygon points="139.3,86.9 147.5,76.9 156.6,75.1 164.7,80.5 169.3,91.4 169.3,107.8 164.7,116.9 153.0,100.5" fill="#26242e"/><polygon points="78.0,78.7 93.0,78.0 109.3,77.8 125.7,81.4 139.3,86.9 153.0,100.5 164.7,116.9 170.2,133.2 173.0,148.0 173.8,162.3 170.2,178.7 163.0,193.2 147.5,209.6 125.7,217.7 104.0,224.0 98.4,225.5 81.6,220.5 59.8,213.2 38.0,200.5 27.0,180.5 23.0,164.0 22.5,148.0 26.0,133.0 32.5,115.0 47.0,97.8 58.3,85.0" fill="#e8e8ec"/>
<polygon points="42.2,103.5 37.3,109.3 27.0,99.3" fill="#282630" stroke="#282630"/>
<polygon points="27.6,107.0 37.3,109.3 32.5,115.0" fill="#292731" stroke="#292731"/>
<polygon points="37.3,109.3 27.6,107.0 27.0,99.3" fill="#211f29" stroke="#211f29"/>
<polygon points="27.0,99.3 27.6,107.0 26.3,91.6" fill="#32303b" stroke="#32303b"/>
<polygon points="36.7,80.2 37.6,76.8 44.3,74.0" fill="#2a2832" stroke="#2a2832"/>
<polygon points="50.0,76.3 43.4,89.0 44.3,74.0" fill="#2e2c37" stroke="#2e2c37"/>
<polygon points="43.4,89.0 36.7,80.2 44.3,74.0" fill="#222029" stroke="#222029"/>
<polygon points="43.4,89.0 52.6,91.4 47.0,97.8" fill="#211f28" stroke="#211f28"/>
<polygon points="36.7,80.2 43.4,89.0 28.6,85.6" fill="#24222b" stroke="#24222b"/>
<polygon points="42.2,103.5 43.4,89.0 47.0,97.8" fill="#25232d" stroke="#25232d"/>
<polygon points="36.7,80.2 30.8,79.5 37.6,76.8" fill="#2a2833" stroke="#2a2833"/>
<polygon points="30.8,79.5 36.7,80.2 28.6,85.6" fill="#282630" stroke="#282630"/>
<polygon points="43.4,89.0 53.8,85.9 52.6,91.4" fill="#23212b" stroke="#23212b"/>
<polygon points="53.8,85.9 54.1,80.7 58.3,85.0" fill="#1f1d27" stroke="#1f1d27"/>
<polygon points="52.6,91.4 53.8,85.9 58.3,85.0" fill="#22202a" stroke="#22202a"/>
<polygon points="54.1,80.7 53.8,85.9 50.0,76.3" fill="#2f2d37" stroke="#2f2d37"/>
<polygon points="53.8,85.9 43.4,89.0 50.0,76.3" fill="#201e28" stroke="#201e28"/>
<polygon points="28.6,85.6 28.2,94.8 26.3,91.6" fill="#282630" stroke="#282630"/>
<polygon points="43.4,89.0 28.2,94.8 28.6,85.6" fill="#292731" stroke="#292731"/>
<polygon points="28.2,94.8 27.0,99.3 26.3,91.6" fill="#1c1a23" stroke="#1c1a23"/>
<polygon points="28.2,94.8 42.2,103.5 27.0,99.3" fill="#26242e" stroke="#26242e"/>
<polygon points="28.2,94.8 43.4,89.0 42.2,103.5" fill="#2f2d38" stroke="#2f2d38"/>
<polygon points="158.9,108.7 169.3,107.8 164.7,116.9" fill="#19161e" stroke="#19161e"/>
<polygon points="167.0,85.9 161.2,87.1 164.7,80.5" fill="#2d2a34" stroke="#2d2a34"/>
<polygon points="164.7,80.5 161.2,87.1 156.6,75.1" fill="#2b2831" stroke="#2b2831"/>
<polygon points="161.2,87.1 147.5,76.9 156.6,75.1" fill="#28252e" stroke="#28252e"/>
<polygon points="147.5,76.9 161.2,87.1 143.2,85.5" fill="#16131b" stroke="#16131b"/>
<polygon points="161.2,87.1 167.0,85.9 169.3,91.4" fill="#201d25" stroke="#201d25"/>
<polygon points="162.2,99.1 169.3,99.6 169.3,107.8" fill="#2a2730" stroke="#2a2730"/>
<polygon points="158.9,108.7 162.2,99.1 169.3,107.8" fill="#17141c" stroke="#17141c"/>
<polygon points="162.2,99.1 158.9,108.7 153.0,100.5" fill="#232029" stroke="#232029"/>
<polygon points="169.3,99.6 162.2,99.1 169.3,91.4" fill="#2b2832" stroke="#2b2832"/>
<polygon points="162.2,99.1 161.2,87.1 169.3,91.4" fill="#1b1820" stroke="#1b1820"/>
<polygon points="143.4,81.9 143.2,85.5 139.3,86.9" fill="#2f2c36" stroke="#2f2c36"/>
<polygon points="143.4,81.9 147.5,76.9 143.2,85.5" fill="#28252e" stroke="#28252e"/>
<polygon points="161.2,87.1 156.7,94.2 143.2,85.5" fill="#232029" stroke="#232029"/>
<polygon points="156.7,94.2 162.2,99.1 153.0,100.5" fill="#26232d" stroke="#26232d"/>
<polygon points="162.2,99.1 156.7,94.2 161.2,87.1" fill="#29262f" stroke="#29262f"/>
<polygon points="146.1,93.7 156.7,94.2 153.0,100.5" fill="#25222b" stroke="#25222b"/>
<polygon points="156.7,94.2 146.1,93.7 143.2,85.5" fill="#2c2933" stroke="#2c2933"/>
<polygon points="143.2,85.5 146.1,93.7 139.3,86.9" fill="#1f1c25" stroke="#1f1c25"/>
<polygon points="157.5,170.5 172.0,170.5 170.2,178.7" fill="#f4f4f8" stroke="#f4f4f8"/>
<polygon points="47.8,191.8 45.3,204.7 38.0,200.5" fill="#8a8a8e" stroke="#8a8a8e"/>
<polygon points="34.3,193.8 47.8,191.8 38.0,200.5" fill="#69696d" stroke="#69696d"/>
<polygon points="23.0,164.0 38.6,160.6 38.2,171.5" fill="#e1e1e5" stroke="#e1e1e5"/>
<polygon points="37.9,131.5 26.0,133.0 29.2,124.0" fill="#e1e1e5" stroke="#e1e1e5"/>
<polygon points="71.8,154.4 78.4,161.4 58.9,164.4" fill="#f2f2f6" stroke="#f2f2f6"/>
<polygon points="32.5,115.0 37.9,131.5 29.2,124.0" fill="#ebebef" stroke="#ebebef"/>
<polygon points="37.9,131.5 32.5,115.0 44.8,115.3" fill="#f6f6fa" stroke="#f6f6fa"/>
<polygon points="68.1,81.8 63.4,96.9 58.3,85.0" fill="#eeeef2" stroke="#eeeef2"/>
<polygon points="132.2,102.9 139.3,86.9 146.1,93.7" fill="#d3d3d7" stroke="#d3d3d7"/>
<polygon points="172.0,170.5 164.8,158.9 173.8,162.3" fill="#ececf0" stroke="#ececf0"/>
<polygon points="157.5,170.5 164.8,158.9 172.0,170.5" fill="#eeeef2" stroke="#eeeef2"/>
<polygon points="164.8,158.9 173.4,155.1 173.8,162.3" fill="#f0f0f4" stroke="#f0f0f4"/>
<polygon points="30.7,187.2 27.0,180.5 38.2,171.5" fill="#b0b0b4" stroke="#b0b0b4"/>
<polygon points="52.2,172.0 38.6,160.6 58.9,164.4" fill="#f3f3f7" stroke="#f3f3f7"/>
<polygon points="38.6,160.6 52.2,172.0 38.2,171.5" fill="#d8d8dc" stroke="#d8d8dc"/>
<polygon points="27.0,180.5 25.0,172.2 38.2,171.5" fill="#d6d6da" stroke="#d6d6da"/>
<polygon points="25.0,172.2 23.0,164.0 38.2,171.5" fill="#e9e9ed" stroke="#e9e9ed"/>
<polygon points="37.1,151.4 22.8,156.0 22.5,148.0" fill="#e8e8ec" stroke="#e8e8ec"/>
<polygon points="38.6,160.6 22.8,156.0 37.1,151.4" fill="#d9d9dd" stroke="#d9d9dd"/>
<polygon points="22.8,156.0 38.6,160.6 23.0,164.0" fill="#e2e2e6" stroke="#e2e2e6"/>
<polygon points="24.2,140.5 37.1,151.4 22.5,148.0" fill="#e0e0e4" stroke="#e0e0e4"/>
<polygon points="37.9,131.5 24.2,140.5 26.0,133.0" fill="#e5e5e9" stroke="#e5e5e9"/>
<polygon points="78.4,161.4 61.7,180.1 58.9,164.4" fill="#f7f7fb" stroke="#f7f7fb"/>
<polygon points="61.7,180.1 52.2,172.0 58.9,164.4" fill="#fcfcff" stroke="#fcfcff"/>
<polygon points="52.1,124.8 37.9,131.5 44.8,115.3" fill="#f5f5f9" stroke="#f5f5f9"/>
<polygon points="48.6,147.7 38.6,160.6 37.1,151.4" fill="#e8e8ec" stroke="#e8e8ec"/>
<polygon points="78.4,161.4 82.0,152.6 98.6,156.8" fill="#f8f8fc" stroke="#f8f8fc"/>
<polygon points="82.0,152.6 93.0,149.3 98.6,156.8" fill="#f6f6fa" stroke="#f6f6fa"/>
<polygon points="82.0,152.6 78.4,161.4 71.8,154.4" fill="#fbfbff" stroke="#fbfbff"/>
<polygon points="37.3,109.3 42.2,103.5 44.8,115.3" fill="#fcfcff" stroke="#fcfcff"/>
<polygon points="32.5,115.0 37.3,109.3 44.8,115.3" fill="#f6f6fa" stroke="#f6f6fa"/>
<polygon points="42.2,103.5 55.9,111.3 44.8,115.3" fill="#dfdfe3" stroke="#dfdfe3"/>
<polygon points="55.9,111.3 52.1,124.8 44.8,115.3" fill="#fafafe" stroke="#fafafe"/>
<polygon points="63.4,96.9 52.6,91.4 58.3,85.0" fill="#cdcdd1" stroke="#cdcdd1"/>
<polygon points="85.5,78.3 77.6,95.9 78.0,78.7" fill="#f4f4f8" stroke="#f4f4f8"/>
<polygon points="77.6,95.9 68.1,81.8 78.0,78.7" fill="#f4f4f8" stroke="#f4f4f8"/>
<polygon points="77.6,95.9 63.4,96.9 68.1,81.8" fill="#fcfcff" stroke="#fcfcff"/>
<polygon points="132.2,102.9 132.5,84.2 139.3,86.9" fill="#cdcdd1" stroke="#cdcdd1"/>
<polygon points="132.5,84.2 119.8,89.2 125.7,81.4" fill="#f9f9fd" stroke="#f9f9fd"/>
<polygon points="119.8,89.2 132.5,84.2 132.2,102.9" fill="#f2f2f6" stroke="#f2f2f6"/>
<polygon points="119.8,89.2 102.4,99.5 109.3,77.8" fill="#fcfcff" stroke="#fcfcff"/>
<polygon points="147.5,109.0 132.2,102.9 146.1,93.7" fill="#dadade" stroke="#dadade"/>
<polygon points="102.4,99.5 101.1,77.9 109.3,77.8" fill="#fcfcff" stroke="#fcfcff"/>
<polygon points="115.2,152.5 100.5,169.0 98.6,156.8" fill="#f7f7fb" stroke="#f7f7fb"/>
<polygon points="115.2,152.5 116.4,177.4 100.5,169.0" fill="#fcfcff" stroke="#fcfcff"/>
<polygon points="170.2,133.2 160.6,143.3 167.4,125.1" fill="#e6e6ea" stroke="#e6e6ea"/>
<polygon points="160.6,143.3 170.2,133.2 171.6,140.6" fill="#eaeaee" stroke="#eaeaee"/>
<polygon points="173.0,148.0 160.6,143.3 171.6,140.6" fill="#f0f0f4" stroke="#f0f0f4"/>
<polygon points="164.8,158.9 173.0,148.0 173.4,155.1" fill="#f9f9fd" stroke="#f9f9fd"/>
<polygon points="173.0,148.0 164.8,158.9 160.6,143.3" fill="#f7f7fb" stroke="#f7f7fb"/>
<polygon points="142.8,158.7 138.5,168.9 132.2,160.0" fill="#f7f7fb" stroke="#f7f7fb"/>
<polygon points="88.1,206.6 74.3,218.1 72.8,196.1" fill="#9b9b9f" stroke="#9b9b9f"/>
<polygon points="116.4,177.4 100.0,180.1 100.5,169.0" fill="#f9f9fd" stroke="#f9f9fd"/>
<polygon points="154.6,159.8 164.8,158.9 157.5,170.5" fill="#fcfcff" stroke="#fcfcff"/>
<polygon points="138.5,168.9 154.6,159.8 157.5,170.5" fill="#f9f9fd" stroke="#f9f9fd"/>
<polygon points="154.6,159.8 138.5,168.9 142.8,158.7" fill="#f5f5f9" stroke="#f5f5f9"/>
<polygon points="154.6,159.8 142.8,158.7 149.7,148.6" fill="#f9f9fd" stroke="#f9f9fd"/>
<polygon points="160.6,143.3 154.6,159.8 149.7,148.6" fill="#f1f1f5" stroke="#f1f1f5"/>
<polygon points="164.8,158.9 154.6,159.8 160.6,143.3" fill="#ededf1" stroke="#ededf1"/>
<polygon points="30.7,187.2 47.3,180.5 34.3,193.8" fill="#9a9a9e" stroke="#9a9a9e"/>
<polygon points="47.3,180.5 47.8,191.8 34.3,193.8" fill="#d0d0d4" stroke="#d0d0d4"/>
<polygon points="47.3,180.5 30.7,187.2 38.2,171.5" fill="#c0c0c4" stroke="#c0c0c4"/>
<polygon points="52.2,172.0 47.3,180.5 38.2,171.5" fill="#f8f8fc" stroke="#f8f8fc"/>
<polygon points="47.3,180.5 61.7,180.1 47.8,191.8" fill="#e1e1e5" stroke="#e1e1e5"/>
<polygon points="61.7,180.1 47.3,180.5 52.2,172.0" fill="#e2e2e6" stroke="#e2e2e6"/>
<polygon points="74.3,218.1 67.1,215.6 72.8,196.1" fill="#8d8d91" stroke="#8d8d91"/>
<polygon points="67.1,215.6 59.8,213.2 72.8,196.1" fill="#9f9fa3" stroke="#9f9fa3"/>
<polygon points="52.5,209.0 47.8,191.8 72.8,196.1" fill="#a5a5a9" stroke="#a5a5a9"/>
<polygon points="59.8,213.2 52.5,209.0 72.8,196.1" fill="#9a9a9e" stroke="#9a9a9e"/>
<polygon points="47.8,191.8 52.5,209.0 45.3,204.7" fill="#7d7d81" stroke="#7d7d81"/>
<polygon points="41.9,141.4 48.6,147.7 37.1,151.4" fill="#d7d7db" stroke="#d7d7db"/>
<polygon points="24.2,140.5 41.9,141.4 37.1,151.4" fill="#e1e1e5" stroke="#e1e1e5"/>
<polygon points="41.9,141.4 24.2,140.5 37.9,131.5" fill="#e5e5e9" stroke="#e5e5e9"/>
<polygon points="52.1,124.8 41.9,141.4 37.9,131.5" fill="#fcfcff" stroke="#fcfcff"/>
<polygon points="38.6,160.6 56.8,154.3 58.9,164.4" fill="#f8f8fc" stroke="#f8f8fc"/>
<polygon points="48.6,147.7 56.8,154.3 38.6,160.6" fill="#f5f5f9" stroke="#f5f5f9"/>
<polygon points="56.8,154.3 71.8,154.4 58.9,164.4" fill="#efeff3" stroke="#efeff3"/>
<polygon points="56.8,154.3 61.7,139.7 71.8,154.4" fill="#f5f5f9" stroke="#f5f5f9"/>
<polygon points="61.7,139.7 56.8,154.3 48.6,147.7" fill="#f3f3f7" stroke="#f3f3f7"/>
<polygon points="41.9,141.4 61.7,139.7 48.6,147.7" fill="#fbfbff" stroke="#fbfbff"/>
<polygon points="61.7,139.7 52.1,124.8 60.7,129.1" fill="#fcfcff" stroke="#fcfcff"/>
<polygon points="61.7,139.7 41.9,141.4 52.1,124.8" fill="#f7f7fb" stroke="#f7f7fb"/>
<polygon points="55.9,111.3 47.0,97.8 63.4,96.9" fill="#cfcfd3" stroke="#cfcfd3"/>
<polygon points="47.0,97.8 52.6,91.4 63.4,96.9" fill="#cfcfd3" stroke="#cfcfd3"/>
<polygon points="47.0,97.8 55.9,111.3 42.2,103.5" fill="#d0d0d4" stroke="#d0d0d4"/>
<polygon points="77.6,95.9 89.1,104.8 81.2,110.8" fill="#eeeef2" stroke="#eeeef2"/>
<polygon points="115.4,99.7 132.2,102.9 121.1,107.8" fill="#fbfbff" stroke="#fbfbff"/>
<polygon points="115.4,99.7 119.8,89.2 132.2,102.9" fill="#f8f8fc" stroke="#f8f8fc"/>
<polygon points="119.8,89.2 115.4,99.7 102.4,99.5" fill="#f3f3f7" stroke="#f3f3f7"/>
<polygon points="117.5,79.6 119.8,89.2 109.3,77.8" fill="#f1f1f5" stroke="#f1f1f5"/>
<polygon points="119.8,89.2 117.5,79.6 125.7,81.4" fill="#f3f3f7" stroke="#f3f3f7"/>
<polygon points="160.6,143.3 149.7,121.2 167.4,125.1" fill="#e9e9ed" stroke="#e9e9ed"/>
<polygon points="158.9,108.7 149.7,121.2 147.5,109.0" fill="#fafafe" stroke="#fafafe"/>
<polygon points="149.7,121.2 160.6,143.3 149.7,148.6" fill="#fcfcff" stroke="#fcfcff"/>
<polygon points="101.1,77.9 93.1,95.3 93.0,78.0" fill="#e5e5e9" stroke="#e5e5e9"/>
<polygon points="93.1,95.3 101.1,77.9 102.4,99.5" fill="#fafafe" stroke="#fafafe"/>
<polygon points="89.1,104.8 93.1,95.3 102.4,99.5" fill="#f5f5f9" stroke="#f5f5f9"/>
<polygon points="93.1,95.3 89.1,104.8 77.6,95.9" fill="#f4f4f8" stroke="#f4f4f8"/>
<polygon points="93.1,95.3 85.5,78.3 93.0,78.0" fill="#f4f4f8" stroke="#f4f4f8"/>
<polygon points="93.1,95.3 77.6,95.9 85.5,78.3" fill="#f7f7fb" stroke="#f7f7fb"/>
<polygon points="115.2,152.5 106.3,142.9 117.8,136.0" fill="#f6f6fa" stroke="#f6f6fa"/>
<polygon points="100.5,127.9 106.3,142.9 93.0,149.3" fill="#fcfcff" stroke="#fcfcff"/>
<polygon points="93.0,149.3 106.3,142.9 98.6,156.8" fill="#f4f4f8" stroke="#f4f4f8"/>
<polygon points="106.3,142.9 115.2,152.5 98.6,156.8" fill="#fafafe" stroke="#fafafe"/>
<polygon points="111.6,108.0 115.4,99.7 121.1,107.8" fill="#eeeef2" stroke="#eeeef2"/>
<polygon points="115.4,99.7 111.6,108.0 102.4,99.5" fill="#e4e4e8" stroke="#e4e4e8"/>
<polygon points="128.3,207.3 116.9,210.8 121.3,195.9" fill="#b0b0b4" stroke="#b0b0b4"/>
<polygon points="116.9,210.8 128.3,207.3 125.7,217.7" fill="#717175" stroke="#717175"/>
<polygon points="138.5,168.9 129.4,171.7 132.2,160.0" fill="#eeeef2" stroke="#eeeef2"/>
<polygon points="129.4,171.7 115.2,152.5 132.2,160.0" fill="#e1e1e5" stroke="#e1e1e5"/>
<polygon points="115.2,152.5 129.4,171.7 116.4,177.4" fill="#eaeaee" stroke="#eaeaee"/>
<polygon points="88.1,206.6 81.6,220.5 74.3,218.1" fill="#717175" stroke="#717175"/>
<polygon points="81.6,220.5 88.1,206.6 90.0,223.0" fill="#707074" stroke="#707074"/>
<polygon points="100.5,169.0 86.9,175.1 98.6,156.8" fill="#eaeaee" stroke="#eaeaee"/>
<polygon points="86.9,175.1 78.4,161.4 98.6,156.8" fill="#f6f6fa" stroke="#f6f6fa"/>
<polygon points="100.0,180.1 86.9,175.1 100.5,169.0" fill="#dbdbdf" stroke="#dbdbdf"/>
<polygon points="86.9,175.1 100.0,180.1 88.7,184.8" fill="#f7f7fb" stroke="#f7f7fb"/>
<polygon points="86.9,175.1 61.7,180.1 78.4,161.4" fill="#f3f3f7" stroke="#f3f3f7"/>
<polygon points="88.1,206.6 84.7,197.7 97.4,201.1" fill="#bbbbbf" stroke="#bbbbbf"/>
<polygon points="84.7,197.7 88.7,184.8 97.4,201.1" fill="#e2e2e6" stroke="#e2e2e6"/>
<polygon points="84.7,197.7 88.1,206.6 72.8,196.1" fill="#c4c4c8" stroke="#c4c4c8"/>
<polygon points="88.7,184.8 84.7,197.7 72.8,196.1" fill="#efeff3" stroke="#efeff3"/>
<polygon points="103.1,192.9 116.4,177.4 121.3,195.9" fill="#e4e4e8" stroke="#e4e4e8"/>
<polygon points="103.1,192.9 100.0,180.1 116.4,177.4" fill="#dbdbdf" stroke="#dbdbdf"/>
<polygon points="116.9,210.8 103.1,192.9 121.3,195.9" fill="#b4b4b8" stroke="#b4b4b8"/>
<polygon points="103.1,192.9 116.9,210.8 97.4,201.1" fill="#b5b5b9" stroke="#b5b5b9"/>
<polygon points="88.7,184.8 103.1,192.9 97.4,201.1" fill="#eeeef2" stroke="#eeeef2"/>
<polygon points="100.0,180.1 103.1,192.9 88.7,184.8" fill="#f5f5f9" stroke="#f5f5f9"/>
<polygon points="152.7,204.1 144.2,199.9 157.8,198.7" fill="#939397" stroke="#939397"/>
<polygon points="144.2,199.9 147.5,209.6 140.2,212.3" fill="#747478" stroke="#747478"/>
<polygon points="147.5,209.6 144.2,199.9 152.7,204.1" fill="#7f7f83" stroke="#7f7f83"/>
<polygon points="74.3,116.9 72.1,105.8 81.2,110.8" fill="#f6f6fa" stroke="#f6f6fa"/>
<polygon points="72.1,105.8 77.6,95.9 81.2,110.8" fill="#fcfcff" stroke="#fcfcff"/>
<polygon points="77.6,95.9 72.1,105.8 63.4,96.9" fill="#f5f5f9" stroke="#f5f5f9"/>
<polygon points="82.0,152.6 81.9,136.7 93.0,149.3" fill="#f2f2f6" stroke="#f2f2f6"/>
<polygon points="153.0,100.5 147.5,109.0 146.1,93.7" fill="#d8d8dc" stroke="#d8d8dc"/>
<polygon points="153.0,100.5 158.9,108.7 147.5,109.0" fill="#f8f8fc" stroke="#f8f8fc"/>
<polygon points="139.3,86.9 153.0,100.5 146.1,93.7" fill="#e2e2e6" stroke="#e2e2e6"/>
<polygon points="149.7,121.2 164.7,116.9 167.4,125.1" fill="#eeeef2" stroke="#eeeef2"/>
<polygon points="164.7,116.9 149.7,121.2 158.9,108.7" fill="#fcfcff" stroke="#fcfcff"/>
<polygon points="164.7,116.9 170.2,133.2 167.4,125.1" fill="#f3f3f7" stroke="#f3f3f7"/>
<polygon points="142.8,158.7 136.0,148.4 149.7,148.6" fill="#fbfbff" stroke="#fbfbff"/>
<polygon points="136.0,148.4 142.8,158.7 132.2,160.0" fill="#f1f1f5" stroke="#f1f1f5"/>
<polygon points="115.2,152.5 136.0,148.4 132.2,160.0" fill="#fcfcff" stroke="#fcfcff"/>
<polygon points="135.9,138.8 149.7,121.2 149.7,148.6" fill="#fbfbff" stroke="#fbfbff"/>
<polygon points="136.0,148.4 135.9,138.8 149.7,148.6" fill="#f8f8fc" stroke="#f8f8fc"/>
<polygon points="147.5,109.0 137.4,120.6 132.2,102.9" fill="#ececf0" stroke="#ececf0"/>
<polygon points="149.7,121.2 137.4,120.6 147.5,109.0" fill="#f6f6fa" stroke="#f6f6fa"/>
<polygon points="135.9,138.8 137.4,120.6 149.7,121.2" fill="#f3f3f7" stroke="#f3f3f7"/>
<polygon points="106.3,142.9 108.3,132.9 117.8,136.0" fill="#f8f8fc" stroke="#f8f8fc"/>
<polygon points="108.3,132.9 106.3,142.9 100.5,127.9" fill="#d9d9dd" stroke="#d9d9dd"/>
<polygon points="102.2,113.0 89.1,104.8 102.4,99.5" fill="#f9f9fd" stroke="#f9f9fd"/>
<polygon points="111.6,108.0 102.2,113.0 102.4,99.5" fill="#f4f4f8" stroke="#f4f4f8"/>
<polygon points="133.0,215.0 128.3,207.3 140.2,212.3" fill="#66666a" stroke="#66666a"/>
<polygon points="128.3,207.3 133.0,215.0 125.7,217.7" fill="#6b6b6f" stroke="#6b6b6f"/>
<polygon points="116.9,210.8 101.4,214.5 97.4,201.1" fill="#d0d0d4" stroke="#d0d0d4"/>
<polygon points="101.4,214.5 88.1,206.6 97.4,201.1" fill="#bababe" stroke="#bababe"/>
<polygon points="98.4,225.5 101.4,214.5 104.0,224.0" fill="#727276" stroke="#727276"/>
<polygon points="88.1,206.6 101.4,214.5 90.0,223.0" fill="#9a9a9e" stroke="#9a9a9e"/>
<polygon points="101.4,214.5 98.4,225.5 90.0,223.0" fill="#68686c" stroke="#68686c"/>
<polygon points="118.5,219.8 116.9,210.8 125.7,217.7" fill="#7b7b7f" stroke="#7b7b7f"/>
<polygon points="86.9,175.1 67.6,187.0 61.7,180.1" fill="#fcfcff" stroke="#fcfcff"/>
<polygon points="67.6,187.0 86.9,175.1 88.7,184.8" fill="#fbfbff" stroke="#fbfbff"/>
<polygon points="67.6,187.0 88.7,184.8 72.8,196.1" fill="#dedee2" stroke="#dedee2"/>
<polygon points="47.8,191.8 67.6,187.0 72.8,196.1" fill="#ccccd0" stroke="#ccccd0"/>
<polygon points="61.7,180.1 67.6,187.0 47.8,191.8" fill="#ceced2" stroke="#ceced2"/>
<polygon points="153.1,180.6 166.6,185.9 163.0,193.2" fill="#b8b8bc" stroke="#b8b8bc"/>
<polygon points="153.1,180.6 138.5,168.9 157.5,170.5" fill="#fcfcff" stroke="#fcfcff"/>
<polygon points="153.1,180.6 157.5,170.5 170.2,178.7" fill="#ababaf" stroke="#ababaf"/>
<polygon points="166.6,185.9 153.1,180.6 170.2,178.7" fill="#afafb3" stroke="#afafb3"/>
<polygon points="65.2,113.6 72.1,105.8 74.3,116.9" fill="#f5f5f9" stroke="#f5f5f9"/>
<polygon points="65.2,113.6 74.3,116.9 60.7,129.1" fill="#f1f1f5" stroke="#f1f1f5"/>
<polygon points="65.2,113.6 55.9,111.3 63.4,96.9" fill="#f5f5f9" stroke="#f5f5f9"/>
<polygon points="72.1,105.8 65.2,113.6 63.4,96.9" fill="#dadade" stroke="#dadade"/>
<polygon points="52.1,124.8 65.2,113.6 60.7,129.1" fill="#fbfbff" stroke="#fbfbff"/>
<polygon points="55.9,111.3 65.2,113.6 52.1,124.8" fill="#f8f8fc" stroke="#f8f8fc"/>
<polygon points="91.2,127.9 100.5,127.9 93.0,149.3" fill="#f9f9fd" stroke="#f9f9fd"/>
<polygon points="81.9,136.7 91.2,127.9 93.0,149.3" fill="#fcfcff" stroke="#fcfcff"/>
<polygon points="76.0,145.5 82.0,152.6 71.8,154.4" fill="#dcdce0" stroke="#dcdce0"/>
<polygon points="76.0,145.5 81.9,136.7 82.0,152.6" fill="#f6f6fa" stroke="#f6f6fa"/>
<polygon points="61.7,139.7 76.0,145.5 71.8,154.4" fill="#e6e6ea" stroke="#e6e6ea"/>
<polygon points="70.8,131.2 61.7,139.7 60.7,129.1" fill="#f8f8fc" stroke="#f8f8fc"/>
<polygon points="74.3,116.9 70.8,131.2 60.7,129.1" fill="#ececf0" stroke="#ececf0"/>
<polygon points="70.8,131.2 76.0,145.5 61.7,139.7" fill="#e3e3e7" stroke="#e3e3e7"/>
<polygon points="76.0,145.5 70.8,131.2 81.9,136.7" fill="#f3f3f7" stroke="#f3f3f7"/>
<polygon points="126.6,140.6 135.9,138.8 136.0,148.4" fill="#f0f0f4" stroke="#f0f0f4"/>
<polygon points="126.6,140.6 115.2,152.5 117.8,136.0" fill="#e8e8ec" stroke="#e8e8ec"/>
<polygon points="126.6,140.6 136.0,148.4 115.2,152.5" fill="#fcfcff" stroke="#fcfcff"/>
<polygon points="132.2,102.9 124.7,120.8 121.1,107.8" fill="#e0e0e4" stroke="#e0e0e4"/>
<polygon points="137.4,120.6 124.7,120.8 132.2,102.9" fill="#fafafe" stroke="#fafafe"/>
<polygon points="124.7,120.8 126.6,140.6 117.8,136.0" fill="#fcfcff" stroke="#fcfcff"/>
<polygon points="124.7,120.8 111.6,108.0 121.1,107.8" fill="#e3e3e7" stroke="#e3e3e7"/>
<polygon points="124.7,120.8 137.4,120.6 135.9,138.8" fill="#fcfcff" stroke="#fcfcff"/>
<polygon points="126.6,140.6 124.7,120.8 135.9,138.8" fill="#f4f4f8" stroke="#f4f4f8"/>
<polygon points="111.2,221.9 101.4,214.5 116.9,210.8" fill="#9c9ca0" stroke="#9c9ca0"/>
<polygon points="118.5,219.8 111.2,221.9 116.9,210.8" fill="#747478" stroke="#747478"/>
<polygon points="101.4,214.5 111.2,221.9 104.0,224.0" fill="#6c6c70" stroke="#6c6c70"/>
<polygon points="157.8,198.7 146.3,187.1 163.0,193.2" fill="#b3b3b7" stroke="#b3b3b7"/>
<polygon points="146.3,187.1 153.1,180.6 163.0,193.2" fill="#cfcfd3" stroke="#cfcfd3"/>
<polygon points="144.2,199.9 146.3,187.1 157.8,198.7" fill="#b2b2b6" stroke="#b2b2b6"/>
<polygon points="153.1,180.6 146.3,187.1 138.5,168.9" fill="#e4e4e8" stroke="#e4e4e8"/>
<polygon points="90.5,117.5 102.2,113.0 100.5,127.9" fill="#dedee2" stroke="#dedee2"/>
<polygon points="91.2,127.9 90.5,117.5 100.5,127.9" fill="#f6f6fa" stroke="#f6f6fa"/>
<polygon points="89.1,104.8 90.5,117.5 81.2,110.8" fill="#f5f5f9" stroke="#f5f5f9"/>
<polygon points="102.2,113.0 90.5,117.5 89.1,104.8" fill="#f8f8fc" stroke="#f8f8fc"/>
<polygon points="81.4,126.0 91.2,127.9 81.9,136.7" fill="#fbfbff" stroke="#fbfbff"/>
<polygon points="81.4,126.0 70.8,131.2 74.3,116.9" fill="#f6f6fa" stroke="#f6f6fa"/>
<polygon points="70.8,131.2 81.4,126.0 81.9,136.7" fill="#f8f8fc" stroke="#f8f8fc"/>
<polygon points="81.4,126.0 90.5,117.5 91.2,127.9" fill="#fcfcff" stroke="#fcfcff"/>
<polygon points="81.4,126.0 74.3,116.9 81.2,110.8" fill="#fbfbff" stroke="#fbfbff"/>
<polygon points="90.5,117.5 81.4,126.0 81.2,110.8" fill="#fcfcff" stroke="#fcfcff"/>
<polygon points="114.4,126.2 102.2,113.0 111.6,108.0" fill="#f1f1f5" stroke="#f1f1f5"/>
<polygon points="124.7,120.8 114.4,126.2 111.6,108.0" fill="#fbfbff" stroke="#fbfbff"/>
<polygon points="114.4,126.2 108.3,132.9 100.5,127.9" fill="#f3f3f7" stroke="#f3f3f7"/>
<polygon points="102.2,113.0 114.4,126.2 100.5,127.9" fill="#fbfbff" stroke="#fbfbff"/>
<polygon points="108.3,132.9 114.4,126.2 117.8,136.0" fill="#ebebef" stroke="#ebebef"/>
<polygon points="114.4,126.2 124.7,120.8 117.8,136.0" fill="#f9f9fd" stroke="#f9f9fd"/>
<polygon points="116.4,177.4 125.8,180.2 121.3,195.9" fill="#e7e7eb" stroke="#e7e7eb"/>
<polygon points="129.4,171.7 125.8,180.2 116.4,177.4" fill="#f3f3f7" stroke="#f3f3f7"/>
<polygon points="125.8,180.2 129.4,171.7 138.5,168.9" fill="#f4f4f8" stroke="#f4f4f8"/>
<polygon points="146.3,187.1 125.8,180.2 138.5,168.9" fill="#f2f2f6" stroke="#f2f2f6"/>
<polygon points="133.5,197.8 146.3,187.1 144.2,199.9" fill="#c0c0c4" stroke="#c0c0c4"/>
<polygon points="133.5,197.8 128.3,207.3 121.3,195.9" fill="#bebec2" stroke="#bebec2"/>
<polygon points="125.8,180.2 133.5,197.8 121.3,195.9" fill="#efeff3" stroke="#efeff3"/>
<polygon points="133.5,197.8 125.8,180.2 146.3,187.1" fill="#eaeaee" stroke="#eaeaee"/>
<polygon points="128.3,207.3 133.5,197.8 140.2,212.3" fill="#b5b5b9" stroke="#b5b5b9"/>
<polygon points="133.5,197.8 144.2,199.9 140.2,212.3" fill="#a5a5a9" stroke="#a5a5a9"/>
<polygon points="147.5,209.6 157.8,198.7 163.0,193.2" fill="#909094" stroke="#909094"/>
<polygon points="54.0,167.3 65.6,166.6 59.8,169.8" fill="#2a2838" stroke="#2a2838"/>
<polygon points="52.7,150.6 54.0,167.3 48.9,159.6" fill="#424052" stroke="#424052"/>
<polygon points="52.7,150.6 65.6,166.6 54.0,167.3" fill="#323041" stroke="#323041"/>
<polygon points="66.8,134.6 73.5,144.4 62.4,142.9" fill="#312f3f" stroke="#312f3f"/>
<polygon points="82.9,135.2 78.8,142.0 75.2,128.8" fill="#343243" stroke="#343243"/>
<polygon points="78.8,142.0 66.8,134.6 75.2,128.8" fill="#343243" stroke="#343243"/>
<polygon points="66.8,134.6 78.8,142.0 73.5,144.4" fill="#333142" stroke="#333142"/>
<polygon points="78.8,142.0 82.9,135.2 83.5,142.9" fill="#312f3f" stroke="#312f3f"/>
<polygon points="80.3,150.6 78.8,142.0 83.5,142.9" fill="#2e2c3c" stroke="#2e2c3c"/>
<polygon points="78.8,142.0 80.3,150.6 73.5,144.4" fill="#393748" stroke="#393748"/>
<polygon points="52.7,150.6 67.3,150.8 65.6,166.6" fill="#363445" stroke="#363445"/>
<polygon points="67.3,150.8 52.7,150.6 57.5,146.8" fill="#302e3e" stroke="#302e3e"/>
<polygon points="80.3,150.6 75.8,157.0 73.5,144.4" fill="#312f3f" stroke="#312f3f"/>
<polygon points="75.8,157.0 67.3,150.8 73.5,144.4" fill="#292736" stroke="#292736"/>
<polygon points="66.9,147.1 57.5,146.8 62.4,142.9" fill="#2b2938" stroke="#2b2938"/>
<polygon points="66.9,147.1 67.3,150.8 57.5,146.8" fill="#252332" stroke="#252332"/>
<polygon points="73.5,144.4 66.9,147.1 62.4,142.9" fill="#2e2c3c" stroke="#2e2c3c"/>
<polygon points="67.3,150.8 66.9,147.1 73.5,144.4" fill="#3b394a" stroke="#3b394a"/>
<polygon points="67.3,150.8 71.3,163.4 65.6,166.6" fill="#393747" stroke="#393747"/>
<polygon points="75.8,157.0 71.3,163.4 67.3,150.8" fill="#302e3e" stroke="#302e3e"/>
<polygon points="143.7,165.6 132.7,160.6 147.2,160.2" fill="#2c2a3a" stroke="#2c2a3a"/>
<polygon points="133.1,168.6 143.7,165.6 140.2,171.1" fill="#3b394a" stroke="#3b394a"/>
<polygon points="143.7,165.6 133.1,168.6 132.7,160.6" fill="#2d2b3a" stroke="#2d2b3a"/>
<polygon points="132.7,160.6 128.6,162.8 124.2,157.0" fill="#393748" stroke="#393748"/>
<polygon points="133.1,168.6 128.6,162.8 132.7,160.6" fill="#272535" stroke="#272535"/>
<polygon points="131.1,146.0 132.7,160.6 124.2,157.0" fill="#2f2d3d" stroke="#2f2d3d"/>
<polygon points="131.1,146.0 140.5,149.4 132.7,160.6" fill="#2c2a3a" stroke="#2c2a3a"/>
<polygon points="140.5,149.4 131.1,146.0 135.7,145.5" fill="#1c1a29" stroke="#1c1a29"/>
<polygon points="124.7,147.6 131.1,146.0 124.2,157.0" fill="#2c2a3a" stroke="#2c2a3a"/>
<polygon points="120.3,129.5 130.6,135.2 125.5,132.4" fill="#333141" stroke="#333141"/>
<polygon points="132.7,160.6 145.3,153.2 147.2,160.2" fill="#2c2a3a" stroke="#2c2a3a"/>
<polygon points="140.5,149.4 145.3,153.2 132.7,160.6" fill="#252332" stroke="#252332"/>
<polygon points="120.4,152.5 124.7,147.6 124.2,157.0" fill="#333141" stroke="#333141"/>
<polygon points="124.7,147.6 120.4,152.5 116.5,148.0" fill="#282636" stroke="#282636"/>
<polygon points="131.1,146.0 133.1,140.4 135.7,145.5" fill="#343243" stroke="#343243"/>
<polygon points="133.1,140.4 124.8,139.5 130.6,135.2" fill="#353343" stroke="#353343"/>
<polygon points="130.6,135.2 124.8,139.5 125.5,132.4" fill="#312f3f" stroke="#312f3f"/>
<polygon points="124.7,147.6 124.8,139.5 131.1,146.0" fill="#2d2b3a" stroke="#2d2b3a"/>
<polygon points="124.8,139.5 133.1,140.4 131.1,146.0" fill="#2e2c3c" stroke="#2e2c3c"/>
<polygon points="120.3,129.5 124.8,139.5 113.3,137.8" fill="#3a3849" stroke="#3a3849"/>
<polygon points="124.8,139.5 120.3,129.5 125.5,132.4" fill="#3c3a4c" stroke="#3c3a4c"/>
<polygon points="124.8,139.5 116.5,148.0 113.3,137.8" fill="#312f3f" stroke="#312f3f"/>
<polygon points="124.8,139.5 124.7,147.6 116.5,148.0" fill="#1e1c2a" stroke="#1e1c2a"/>
<polygon points="106.5,187.0 106.5,199.2 98.0,190.2" fill="#201f26" stroke="#201f26"/>
<polygon points="102.8,200.8 106.5,199.2 98.8,204.6" fill="#1f1e25" stroke="#1f1e25"/>
<polygon points="106.5,199.2 102.8,200.8 98.0,190.2" fill="#131218" stroke="#131218"/>
<polygon points="89.8,198.6 102.8,200.8 98.8,204.6" fill="#18171d" stroke="#18171d"/>
<polygon points="102.8,200.8 89.8,198.6 98.0,190.2" fill="#1c1b22" stroke="#1c1b22"/>
<polygon points="106.5,187.0 114.8,193.4 106.5,199.2" fill="#222127" stroke="#222127"/>
<polygon points="89.0,190.6 91.0,186.4 98.0,190.2" fill="#1a191f" stroke="#1a191f"/>
<polygon points="89.0,190.6 82.0,187.0 91.0,186.4" fill="#24232a" stroke="#24232a"/>
<polygon points="114.8,193.4 113.0,187.7 117.4,186.1" fill="#24232a" stroke="#24232a"/>
<polygon points="113.0,187.7 114.8,193.4 106.5,187.0" fill="#25242b" stroke="#25242b"/>
<polygon points="89.8,198.6 88.5,195.4 98.0,190.2" fill="#26252c" stroke="#26252c"/>
<polygon points="88.5,195.4 89.0,190.6 98.0,190.2" fill="#26252d" stroke="#26252d"/>
<polygon points="89.0,190.6 82.1,191.5 82.0,187.0" fill="#1d1c23" stroke="#1d1c23"/>
<polygon points="88.5,195.4 82.1,191.5 89.0,190.6" fill="#25242c" stroke="#25242c"/>
<polygon points="82.0,187.0 82.1,191.5 77.6,184.5" fill="#222128" stroke="#222128"/>
<polygon points="82.1,191.5 88.5,195.4 89.8,198.6" fill="#25242b" stroke="#25242b"/>
</g></svg>
<!-- faint watermark fragments -->
<div class="a" style="left:769px;top:465px;width:21px;height:6px;border-radius:3px 5px 0 0;background:rgba(255,255,255,.55)"></div>
<svg style="left:838px;top:438px" width="18" height="30" viewBox="0 0 18 30"><path d="M3 30 C2 18 3 8 9 3.500 C11.500 1.800 14 2.200 15 3.500 C11 5 9 9 8.500 14 C8 20 8.500 25 9 30Z" fill="rgba(255,255,255,.42)"/></svg>
<div class="a" style="left:877px;top:438px;width:8px;height:30px;border-radius:3px 3px 0 0;background:rgba(255,255,255,.16)"></div>
<div class="a" style="left:923px;top:440px;width:2px;height:28px;background:rgba(0,0,0,.12)"></div>
<div class="a" style="left:934px;top:394px;width:1.500px;height:43px;background:rgba(0,0,0,.14)"></div>
<div class="a" style="left:934px;top:465px;width:8px;height:3px;border-radius:3px 3px 0 0;background:rgba(255,255,255,.3)"></div>

</div>
</body>
</html>
